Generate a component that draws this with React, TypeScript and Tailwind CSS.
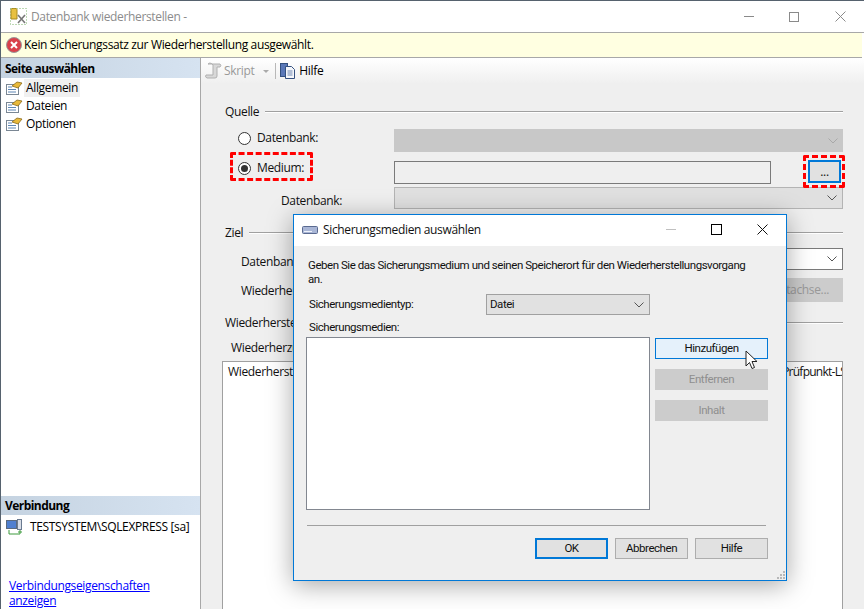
import type { ReactNode } from 'react';

const PageIcon = () => (
  <svg width="18" height="16" viewBox="0 0 18 16" className="shrink-0">
    <rect x="1.5" y="4.5" width="12" height="10" fill="#fff" stroke="#7a8794" />
    <path d="M3 7h4M3 9.5h8M3 12h8" stroke="#5f87b5" strokeWidth="1" />
    <path d="M7 6l5-4 5 1-4 5z" fill="#e8b93a" stroke="#8a6a1c" strokeWidth="0.8" />
  </svg>
);

const Radio = ({ checked }: { checked?: boolean }) => (
  <span className="w-[13px] h-[13px] rounded-full border border-[#333] bg-white flex items-center justify-center shrink-0">
    {checked && <span className="w-[7px] h-[7px] rounded-full bg-[#333]" />}
  </span>
);

const Chevron = ({ color = '#555' }: { color?: string }) => (
  <svg width="10" height="6" viewBox="0 0 10 6" className="shrink-0">
    <path d="M0.5 0.5L5 5L9.5 0.5" fill="none" stroke={color} strokeWidth="1" />
  </svg>
);

const SectionHead = ({ title, className }: { title: string; className: string }) => (
  <div className={`flex items-center h-4 gap-[6px] ${className}`}>
    <span className="pl-[3px]">{title}</span>
    <span className="flex-1 h-[2px] border-t border-[#a0a0a0] bg-white" />
  </div>
);

const DialogButton = ({ children, className }: { children: ReactNode; className: string }) => (
  <div className={`h-[21px] flex items-center justify-center ${className}`}>{children}</div>
);

export default function App() {
  return (
    <div className="relative w-[864px] h-[609px] overflow-hidden bg-white text-[12px] tracking-[-0.35px] text-[#111] flex flex-col border-t border-l border-[#56626e] font-['Open_Sans',sans-serif]">
      {/* Title bar */}
      <div className="h-[32px] shrink-0 flex items-center pl-[9px] border-b border-[#a8a8a8]">
        <svg width="17" height="17" viewBox="0 0 17 17" className="shrink-0">
          <rect x="0.5" y="0.5" width="16" height="16" fill="none" stroke="#7bb36b" strokeDasharray="1 2" />
          <path d="M1 1.5a3 1.2 0 0 1 6 0V11H1z" fill="#e8c040" stroke="#a88a20" />
          <path d="M8 7l7 8M15 7l-7 8" stroke="#777" strokeWidth="1.6" />
        </svg>
        <span className="ml-[4px] text-[#8c8c8c]">Datenbank wiederherstellen -</span>
        <div className="ml-auto flex items-center">
          <span className="w-[10px] h-px bg-[#8a8a8a] mr-[35px]" />
          <span className="w-[10px] h-[10px] border border-[#8a8a8a] mr-[36px]" />
          <svg width="11" height="11" viewBox="0 0 11 11" className="mr-[18px]">
            <path d="M0.5 0.5L10.5 10.5M10.5 0.5L0.5 10.5" stroke="#8a8a8a" />
          </svg>
        </div>
      </div>

      {/* Message bar */}
      <div className="h-[25px] shrink-0 flex items-center pl-[5px] bg-[#ffffe1] border-b border-[#a8a8a8] mr-[2px]">
        <svg width="16" height="16" viewBox="0 0 16 16" className="shrink-0">
          <circle cx="8" cy="8" r="7.5" fill="#d9404a" stroke="#9a9a9a" />
          <path d="M5 5l6 6M11 5l-6 6" stroke="#fff" strokeWidth="2" />
        </svg>
        <span className="ml-[2px] text-black">Kein Sicherungssatz zur Wiederherstellung ausgewählt.</span>
      </div>

      <div className="flex-1 flex min-h-0">
        {/* Left nav */}
        <div className="w-[200px] shrink-0 flex flex-col border-r border-[#a8a8a8]">
          <div className="h-[20px] shrink-0 flex items-center pl-[4px] pt-[2px] font-bold tracking-[-0.55px] text-black bg-gradient-to-r from-[#c5d3e1] to-[#d6e3f1]">
            Seite auswählen
          </div>
          <div className="flex items-center h-[18px] mt-px pl-[4px]">
            <PageIcon />
            <span className="ml-[1px] px-[2px] bg-[#f0f0f0] text-black">Allgemein</span>
          </div>
          <div className="flex items-center h-[18px] pl-[4px]">
            <PageIcon />
            <span className="ml-[3px] text-black">Dateien</span>
          </div>
          <div className="flex items-center h-[18px] pl-[4px]">
            <PageIcon />
            <span className="ml-[3px] text-black">Optionen</span>
          </div>

          <div className="mt-auto h-[19px] shrink-0 flex items-center pl-[4px] pt-px font-bold tracking-[-0.55px] text-black bg-gradient-to-r from-[#c5d3e1] to-[#d6e3f1]">
            Verbindung
          </div>
          <div className="flex items-center h-[18px] mt-[3px] pl-[5px]">
            <svg width="17" height="17" viewBox="0 0 17 17" className="shrink-0">
              <rect x="0.5" y="1.5" width="10" height="8" fill="#4f7fd0" stroke="#5a6a80" />
              <rect x="11.5" y="0.5" width="4" height="10" fill="#d8dde6" stroke="#6a7a90" />
              <path d="M3 11v4h11M14 11v4M12 13h4" fill="none" stroke="#3d9a3d" />
            </svg>
            <span className="ml-[7px] text-black">TESTSYSTEM\SQLEXPRESS [sa]</span>
          </div>
          <div className="mt-[42px] h-[31px] pl-[8px] leading-[15px] text-[#0000ff] underline">
            Verbindungseigenschaften <br />
            anzeigen
          </div>
        </div>

        {/* Right panel */}
        <div className="flex-1 min-w-0 flex flex-col bg-[#efefef] pl-[21px] pr-[21px]">
          <div className="h-[26px] shrink-0 -mx-[21px] pl-[4px] flex items-center bg-gradient-to-b from-white to-[#efefef]">
            <svg width="18" height="18" viewBox="0 0 18 18" className="shrink-0">
              <path d="M3 2h12a2 2 0 0 1 0 3h-3v9a2 2 0 0 1-2 2H2a2 2 0 0 1-1-3h7V5a3 3 0 0 0-5-3z" fill="#d8d8d8" stroke="#b0b0b0" />
            </svg>
            <span className="ml-[1px] text-[#999]">Skript</span>
            <svg width="6" height="3" viewBox="0 0 6 3" className="ml-[9px]">
              <path d="M0 0h6L3 3z" fill="#aaa" />
            </svg>
            <span className="ml-[6px] w-px h-[16px] bg-[#b8b8b8]" />
            <svg width="16" height="16" viewBox="0 0 16 16" className="ml-[4px] shrink-0">
              <rect x="0.5" y="0.5" width="7" height="13" fill="#5a78b8" stroke="#34507f" />
              <path d="M5.5 3.5h6l3 3v9h-9z" fill="#f4f6fa" stroke="#34507f" />
              <path d="M7.5 8h5M7.5 10h5M7.5 12h5" stroke="#6f86b0" />
            </svg>
            <span className="ml-[3px] text-black">Hilfe</span>
          </div>

          <SectionHead title="Quelle" className="mt-[20px]" />
          <div className="flex items-center h-[23px] mt-[9px]">
            <div className="w-[172px] shrink-0 flex items-center pl-[16px] pb-[5px] gap-[6px]">
              <Radio />
              <span>Datenbank:</span>
            </div>
            <div className="flex-1 h-full bg-[#c8c8c8] flex items-center justify-end pr-[5px]">
              <Chevron color="#a8a8a8" />
            </div>
          </div>
          <div className="flex items-center h-[23px] mt-[9px]">
            <div className="relative w-[172px] shrink-0 flex items-center pl-[16px] pb-[9px] gap-[6px]">
              <Radio checked />
              <span>Medium:</span>
              <span className="absolute left-[8px] -top-[7px] w-[83px] h-[29px] border-[3px] border-dashed border-[#ff0000] rounded-[2px]" />
            </div>
            <div className="w-[377px] shrink-0 h-full bg-[#efefef] border border-[#7a7a7a]" />
            <div className="relative ml-[37px] w-[33px] h-[23px] -mt-[2px] border-2 border-[#0078d7] bg-[#e1e1e1] flex items-center justify-center leading-none">
              ...
              <span className="absolute -left-[7px] -top-[7px] w-[42px] h-[33px] border-[3px] border-dashed border-[#ff0000] rounded-[2px]" />
            </div>
          </div>
          <div className="flex items-center h-[22px] mt-[3px]">
            <div className="w-[172px] shrink-0 pl-[59px] pt-[6px]">Datenbank:</div>
            <div className="flex-1 h-full bg-[#e0e0e0] border border-[#b4b4b4] flex items-center justify-end pr-[5px]">
              <Chevron />
            </div>
          </div>

          <SectionHead title="Ziel" className="mt-[16px]" />
          <div className="flex items-center h-[22px] mt-[7px]">
            <div className="w-[172px] shrink-0 pl-[19px] pt-[6px]">Datenbank:</div>
            <div className="flex-1 h-full bg-white border border-[#7a7a7a] flex items-center justify-end pr-[5px]">
              <Chevron />
            </div>
          </div>
          <div className="flex items-center h-[24px] mt-[8px]">
            <div className="w-[172px] shrink-0 pl-[19px] pt-[2px]">Wiederherstellen auf:</div>
            <div className="flex-1" />
            <div className="w-[100px] h-full bg-[#cccccc] flex items-center justify-end pr-[14px] text-[#999]">Zeitachse...</div>
          </div>

          <SectionHead title="Wiederherstellungsplan" className="mt-[13px]" />
          <div className="h-4 mt-[9px] pl-[9px] flex items-center">Wiederherzustellende Sicherungssätze:</div>
          <div className="flex-1 mt-[5px] bg-white border border-[#a0a0a0] border-b-0 pl-[5px] pt-px flex whitespace-nowrap overflow-hidden">
            <span>Wiederherstellen</span>
            <span className="ml-auto -mr-[4px] tracking-[-0.75px]">Prüfpunkt-LS</span>
          </div>
        </div>
      </div>

      {/* Backup media dialog */}
      <div className="absolute left-[292px] top-[213px] w-[494px] h-[367px] flex flex-col bg-[#efefef] border border-[#0078d7] shadow-[0_4px_24px_rgba(0,0,0,0.35)]">
        <div className="h-[31px] shrink-0 bg-white flex items-center pl-[8px] pb-[2px]">
          <svg width="16" height="8" viewBox="0 0 16 8" className="shrink-0">
            <rect x="0.5" y="0.5" width="15" height="7" rx="1" fill="#a9b6d6" stroke="#5a6a90" />
            <path d="M2 5.5h8" stroke="#eef2fa" />
          </svg>
          <span className="ml-[5px]">Sicherungsmedien auswählen</span>
          <div className="ml-auto flex items-center">
            <span className="w-[10px] h-px bg-[#c0c0c0] mr-[35px]" />
            <span className="w-[11px] h-[11px] border border-black mr-[35px]" />
            <svg width="11" height="11" viewBox="0 0 11 11" className="mr-[18px]">
              <path d="M0.5 0.5L10.5 10.5M10.5 0.5L0.5 10.5" stroke="#111" />
            </svg>
          </div>
        </div>

        <div className="flex-1 min-h-0 flex flex-col pl-[12px] pr-[18px] font-['Roboto',sans-serif] text-[11.5px] tracking-[-0.45px]">
          <p className="mt-[12px] ml-[2px] w-[446px] leading-[14px]">
            Geben Sie das Sicherungsmedium und seinen Speicherort für den Wiederherstellungsvorgang an.
          </p>
          <div className="flex items-center h-[21px] mt-[8px]">
            <span className="w-[180px] shrink-0 pl-[3px]">Sicherungsmedientyp:</span>
            <div className="w-[164px] h-full bg-[#e1e1e1] border border-[#a0a0a0] flex items-center justify-between pl-[3px] pr-[5px]">
              <span>Datei</span>
              <Chevron />
            </div>
          </div>
          <div className="h-4 mt-[5px] pl-[3px] flex items-center">Sicherungsmedien:</div>

          <div className="flex mt-[1px] gap-[5px]">
            <div className="w-[344px] h-[173px] bg-white border border-[#828790]" />
            <div className="flex-1 flex flex-col gap-[10px] pt-px">
              <div className="relative">
                <DialogButton className="bg-[#e5f1fb] border border-[#0078d7]">Hinzufügen</DialogButton>
                <svg width="14" height="20" viewBox="0 0 14 20" className="absolute left-[90px] top-[12px]">
                  <path d="M1 1v15l3.5-3.5 2.5 6 2.5-1-2.5-6h5z" fill="#fff" stroke="#222" />
                </svg>
              </div>
              <DialogButton className="bg-[#cccccc] text-[#8f8f8f]">Entfernen</DialogButton>
              <DialogButton className="bg-[#cccccc] text-[#8f8f8f]">Inhalt</DialogButton>
            </div>
          </div>

          <div className="h-px bg-[#a0a0a0] mt-[15px] ml-px mr-[2px] shrink-0" />

          <div className="flex justify-end gap-[7px] mt-[12px]">
            <DialogButton className="w-[73px] bg-[#e1e1e1] border-2 border-[#0078d7]">OK</DialogButton>
            <DialogButton className="w-[73px] bg-[#e1e1e1] border border-[#adadad]">Abbrechen</DialogButton>
            <DialogButton className="w-[73px] bg-[#e1e1e1] border border-[#adadad]">Hilfe</DialogButton>
          </div>
        </div>
        <svg width="9" height="9" viewBox="0 0 9 9" className="absolute right-[1px] bottom-[1px]">
          <path d="M7 1h2v2H7zM4 4h2v2H4zM7 4h2v2H7zM1 7h2v2H1zM4 7h2v2H4zM7 7h2v2H7z" fill="#b8b8b8" />
        </svg>
      </div>
    </div>
  );
}
